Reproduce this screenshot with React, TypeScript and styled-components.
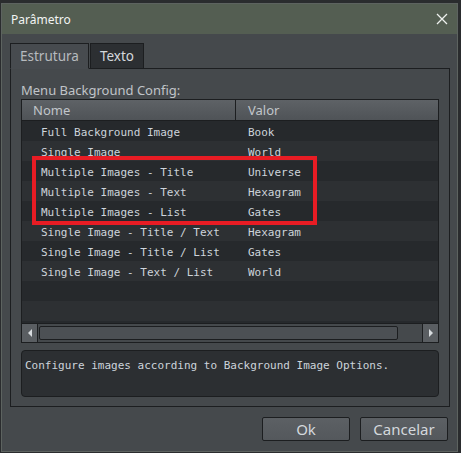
import React from 'react';
import styled, { createGlobalStyle } from 'styled-components';

const GlobalStyle = createGlobalStyle`
  html, body {
    margin: 0;
    padding: 0;
    background: #26282a;
  }
  * {
    box-sizing: border-box;
  }
`;

const Page = styled.div`
  width: 461px;
  height: 453px;
  padding: 3px 3px 1px 1px;
  background: #2a2c2e;
`;

const Dialog = styled.div`
  position: relative;
  height: 100%;
  display: flex;
  flex-direction: column;
  background: #45494c;
  border: 1px solid #5d6360;
  font-family: 'Noto Sans', 'DejaVu Sans', sans-serif;
`;

const TitleBar = styled.div`
  height: 30px;
  flex: none;
  display: flex;
  align-items: center;
  justify-content: space-between;
  padding: 0 8px 0 9px;
  background: #545e52;
  color: #f2f4f2;
  font-size: 12px;
`;

const CloseButton = styled.div`
  width: 14px;
  height: 14px;
  display: flex;
  align-items: center;
  justify-content: center;
`;

const Body = styled.div`
  flex: none;
  display: flex;
  flex-direction: column;
  padding: 9px 8px 0 8px;
`;

const TabRow = styled.div`
  display: flex;
  height: 26px;
  position: relative;
  z-index: 1;
  margin-bottom: -1px;
`;

const Tab = styled.div<{ $active?: boolean }>`
  height: 26px;
  padding: 0 9px;
  display: flex;
  align-items: center;
  font-size: 13.5px;
  color: ${(p) => (p.$active ? '#b6babe' : '#d4d8dc')};
  background: ${(p) => (p.$active ? '#474b4f' : '#2c2f32')};
  border: 1px solid #1c1e20;
  border-bottom: ${(p) => (p.$active ? '1px solid #474b4f' : '1px solid #1c1e20')};
  margin-right: 1px;
`;

const Panel = styled.div`
  width: 440px;
  height: 339px;
  border: 1px solid #1c1e20;
  padding: 12px 9px 0 10px;
  display: flex;
  flex-direction: column;
`;

const GroupLabel = styled.div`
  height: 18px;
  font-size: 13px;
  color: #c0c4c8;
  line-height: 19px;
`;

const TableBox = styled.div`
  position: relative;
  width: 418px;
  height: 244px;
  flex: none;
  border: 1px solid #1c1e20;
  background: #26292c;
  display: flex;
  flex-direction: column;
`;

const HeaderRow = styled.div`
  height: 21px;
  flex: none;
  display: grid;
  grid-template-columns: 213px 1fr;
  background: linear-gradient(#5e6266, #4f5357);
  border-bottom: 1px solid #1c1e20;
`;

const HeaderCell = styled.div<{ $divider?: boolean }>`
  display: flex;
  align-items: center;
  padding-left: ${(p) => (p.$divider ? '12px' : '11px')};
  font-size: 13px;
  color: #c2c6ca;
  border-left: ${(p) => (p.$divider ? '1px solid #1c1e20' : 'none')};
`;

const Rows = styled.div`
  flex: 1;
  display: flex;
  flex-direction: column;
`;

const Row = styled.div<{ $alt: boolean }>`
  height: 20px;
  flex: none;
  display: grid;
  grid-template-columns: 213px 1fr;
  padding-top: 2px;
  background: ${(p) => (p.$alt ? '#2d3033' : '#26292c')};
  font-family: 'DejaVu Sans Mono', monospace;
  font-size: 11px;
  color: #cdd4db;
  align-items: center;
`;

const NameCell = styled.div`
  padding-left: 19px;
  white-space: pre;
`;

const ValueCell = styled.div`
  padding-left: 13px;
  white-space: pre;
`;

const ScrollBar = styled.div`
  height: 19px;
  flex: none;
  display: flex;
  background: #3a3e41;
  border-top: 1px solid #1c1e20;
`;

const ScrollArrow = styled.div`
  width: 16px;
  flex: none;
  display: flex;
  align-items: center;
  justify-content: center;
  background: #5a5e62;
  border-right: 1px solid #1c1e20;
  &:last-child {
    border-right: none;
    border-left: 1px solid #1c1e20;
  }
`;

const ScrollTrack = styled.div`
  flex: 1;
  display: flex;
  padding: 2px 24px 2px 1px;
  background: #45494c;
`;

const ScrollThumb = styled.div`
  flex: 1;
  background: #4c5054;
  border: 1px solid #1c1e20;
  border-radius: 2px;
`;

const Highlight = styled.div`
  position: absolute;
  left: 10px;
  top: 56px;
  width: 285px;
  height: 69px;
  border: 4px solid #e81c24;
  pointer-events: none;
`;

const Description = styled.div`
  margin-top: 7px;
  width: 418px;
  height: 47px;
  flex: none;
  border: 1px solid #1c1e20;
  border-radius: 4px;
  background: #2c2f32;
  padding: 8px 3px;
  font-family: 'DejaVu Sans Mono', monospace;
  font-size: 11px;
  color: #cdd4db;
`;

const Footer = styled.div`
  flex: 1;
  display: flex;
  justify-content: flex-end;
  align-items: flex-start;
  gap: 10px;
  padding: 10px 9px 0 0;
`;

const Button = styled.div`
  width: 88px;
  height: 24px;
  display: flex;
  align-items: center;
  justify-content: center;
  background: linear-gradient(#5c6064, #54585c);
  border: 1px solid #1c1e20;
  border-radius: 2px;
  color: #d4d8dc;
  font-size: 15px;
`;

const rows = [
  ['Full Background Image', 'Book'],
  ['Single Image', 'World'],
  ['Multiple Images - Title', 'Universe'],
  ['Multiple Images - Text', 'Hexagram'],
  ['Multiple Images - List', 'Gates'],
  ['Single Image - Title / Text', 'Hexagram'],
  ['Single Image - Title / List', 'Gates'],
  ['Single Image - Text / List', 'World'],
  ['', ''],
  ['', ''],
];

const App = () => {
  return (
    <Page>
      <GlobalStyle />
      <Dialog>
        <TitleBar>
          <span>Parâmetro</span>
          <CloseButton>
            <svg width="12" height="12" viewBox="0 0 12 12">
              <path d="M1 1 L11 11 M11 1 L1 11" stroke="#eef0ee" strokeWidth="1.3" />
            </svg>
          </CloseButton>
        </TitleBar>
        <Body>
          <TabRow>
            <Tab $active>Estrutura</Tab>
            <Tab>Texto</Tab>
          </TabRow>
          <Panel>
            <GroupLabel>Menu Background Config:</GroupLabel>
            <TableBox>
              <HeaderRow>
                <HeaderCell>Nome</HeaderCell>
                <HeaderCell $divider>Valor</HeaderCell>
              </HeaderRow>
              <Rows>
                {rows.map(([name, value], i) => (
                  <Row key={i} $alt={i % 2 === 1}>
                    <NameCell>{name}</NameCell>
                    <ValueCell>{value}</ValueCell>
                  </Row>
                ))}
              </Rows>
              <ScrollBar>
                <ScrollArrow>
                  <svg width="6" height="8" viewBox="0 0 6 8">
                    <path d="M5 0 L5 8 L1 4 Z" fill="#d8dcdf" />
                  </svg>
                </ScrollArrow>
                <ScrollTrack>
                  <ScrollThumb />
                </ScrollTrack>
                <ScrollArrow>
                  <svg width="6" height="8" viewBox="0 0 6 8">
                    <path d="M1 0 L1 8 L5 4 Z" fill="#d8dcdf" />
                  </svg>
                </ScrollArrow>
              </ScrollBar>
              <Highlight />
            </TableBox>
            <Description>Configure images according to Background Image Options.</Description>
          </Panel>
        </Body>
        <Footer>
          <Button>Ok</Button>
          <Button>Cancelar</Button>
        </Footer>
      </Dialog>
    </Page>
  );
};

export default App;
